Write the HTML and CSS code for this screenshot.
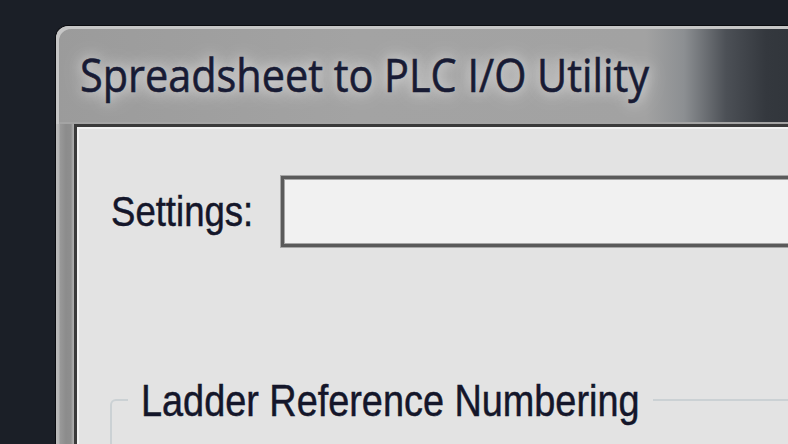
FILE: index.html
```html
<!DOCTYPE html>
<html>
<head>
<meta charset="utf-8">
<link rel="stylesheet" href="styles.css">
</head>
<body>
<div class="window">
  <div class="titlebar">
    <span class="title">Spreadsheet to PLC I/O Utility</span>
  </div>
  <div class="client">
    <div class="row">
      <div class="label"><span class="label-text">Settings:</span></div>
      <div class="textbox"></div>
    </div>
    <fieldset class="group">
      <legend class="group-legend"><span class="legend-text">Ladder Reference Numbering</span></legend>
    </fieldset>
  </div>
</div>
</body>
</html>
```

FILE: styles.css
```css
html, body {
  margin: 0;
  padding: 0;
  width: 788px;
  height: 444px;
  overflow: hidden;
  background: #1b1f27;
}

.window {
  margin: 25px 0 0 55px;
  width: 760px;
  height: 440px;
  border-top: 1px solid #0b0c10;
  border-left: 1px solid #0b0c10;
  border-radius: 13px 0 0 0;
  overflow: hidden;
  background: linear-gradient(to right, #bdbdbd 0, #b5b5b5 3px, #999 4px, #8c8c8c 10px, #8e8e8e 15px, #ababab 17px, #ababab 18px);
}

.titlebar {
  height: 98px;
  box-sizing: border-box;
  padding-left: 24px;
  display: flex;
  align-items: center;
  border-radius: 12px 0 0 0;
  background: linear-gradient(to right, #9b9b9b 0, #a3a3a3 300px, #a2a2a2 590px, #8c8f92 628px, #4c5056 670px, #34383e 710px, #2f3339 760px);
  box-shadow: inset 3px 3px 0 #c6c6c6, inset 0 -2px 0 #a4a4a4;
}

.title {
  display: inline-block;
  font-family: "Open Sans", "Noto Sans", sans-serif;
  font-size: 46px;
  color: #181b34;
  white-space: nowrap;
  transform: scaleX(0.9);
  transform-origin: left center;
  -webkit-text-stroke: 0.6px #181b34;
  text-shadow: 0 0 14px rgba(255, 255, 255, 0.8), 0 0 26px rgba(255, 255, 255, 0.55);
  margin-top: -2px;
}

.client {
  margin-left: 18px;
  height: 330px;
  background: #e3e3e3;
  border-top: 3px solid #3a3a3a;
  border-left: 3px solid #3a3a3a;
  box-shadow: inset 2px 2px 0 #f2f2f2;
  padding: 49px 0 0 33px;
  box-sizing: border-box;
}

.row {
  display: flex;
  align-items: center;
}

.label {
  width: 170px;
  margin-left: 1px;
  flex-shrink: 0;
}

.label-text {
  display: inline-block;
  font-family: "Liberation Sans", Arial, sans-serif;
  font-size: 43px;
  color: #14162a;
  white-space: nowrap;
  -webkit-text-stroke: 0.5px #14162a;
  transform: scaleX(0.85);
  transform-origin: left center;
}

.textbox {
  flex: 1;
  height: 71px;
  box-sizing: border-box;
  background: #f1f1f1;
  border: 3px solid #5a5a5a;
  box-shadow: 0 0 0 1px #a6a6a6, inset 0 0 0 1px #a6a6a6;
}

.group {
  margin: 117px 0 0 0;
  padding: 0 0 0 16px;
  height: 200px;
  border: 2px solid #cbd1d4;
  border-radius: 6px;
}

.group-legend {
  width: 500px;
  padding: 12px 12px 0 13px;
  line-height: 50px;
  white-space: nowrap;
}

.legend-text {
  display: inline-block;
  font-family: "Liberation Sans", Arial, sans-serif;
  font-size: 44px;
  color: #14162a;
  -webkit-text-stroke: 0.5px #14162a;
  transform: scaleX(0.86);
  transform-origin: left center;
}
```
